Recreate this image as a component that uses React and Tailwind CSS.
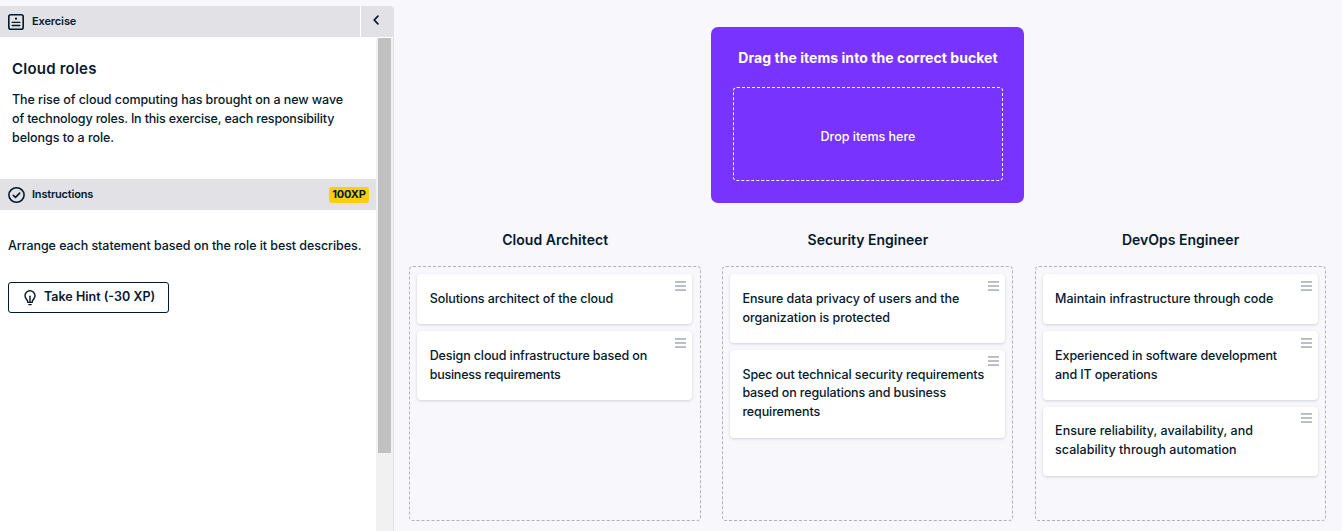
import React from "react";

const buckets = [
  {
    title: "Cloud Architect",
    tracking: "tracking-[0.04px]",
    cards: [
      [["Solutions architect of the cloud", "tracking-[-0.08px]"]],
      [
        ["Design cloud infrastructure based on", "tracking-[-0.11px]"],
        ["business requirements", "tracking-[-0.24px]"],
      ],
    ],
  },
  {
    title: "Security Engineer",
    tracking: "tracking-[0px]",
    cards: [
      [
        ["Ensure data privacy of users and the", "tracking-[-0.05px]"],
        ["organization is protected", "tracking-[-0.04px]"],
      ],
      [
        ["Spec out technical security requirements", "tracking-[-0.09px]"],
        ["based on regulations and business", "tracking-[-0.12px]"],
        ["requirements", "tracking-[-0.12px]"],
      ],
    ],
  },
  {
    title: "DevOps Engineer",
    tracking: "tracking-[0px]",
    cards: [
      [["Maintain infrastructure through code", "tracking-[-0.03px]"]],
      [
        ["Experienced in software development", "tracking-[-0.11px]"],
        ["and IT operations", "tracking-[-0.12px]"],
      ],
      [
        ["Ensure reliability, availability, and", "tracking-[0.01px]"],
        ["scalability through automation", "tracking-[0.03px]"],
      ],
    ],
  },
];

function ExerciseIcon() {
  return (
    <svg width="16" height="16" viewBox="0 0 16 16" fill="none" stroke="currentColor" strokeWidth="1.6" className="shrink-0">
      <rect x="0.8" y="0.8" width="14.4" height="14.4" rx="2" />
      <path d="M4.2 8.4h7.6M4.2 11.5h7.6" strokeWidth="1.4" strokeLinecap="round" />
      <circle cx="8" cy="4.7" r="1.1" fill="currentColor" stroke="none" />
    </svg>
  );
}

function CheckIcon() {
  return (
    <svg width="17" height="16" viewBox="0 0 17 16" fill="none" stroke="currentColor" strokeWidth="1.6" className="shrink-0">
      <ellipse cx="8.5" cy="8" rx="7.6" ry="7.2" />
      <path d="M5.3 8.3l2.2 2.1 4.2-4.3" strokeLinecap="round" strokeLinejoin="round" />
    </svg>
  );
}

function BulbIcon() {
  return (
    <svg width="12" height="16" viewBox="0 0 12 16" fill="none" stroke="currentColor" strokeWidth="1.4" strokeLinecap="round" className="shrink-0">
      <path d="M3.7 11.6C3.6 9.8 1 8.8 1 5.8a5 5 0 0 1 10 0c0 3-2.6 4-2.7 5.8" />
      <path d="M6 6.2v5.6" />
      <path d="M3.8 12.4h4.4" />
      <path d="M4.8 14.6h2.4" />
    </svg>
  );
}

function Card({ lines }) {
  return (
    <div className="relative rounded-[4px] bg-white py-[15.8px] pl-[12.5px] shadow-[0_1px_3px_rgba(5,25,45,0.16)]">
      {lines.map(([text, tracking]) => (
        <p key={text} className={"whitespace-nowrap text-[12.5px] leading-[18.8px] font-medium " + tracking}>
          {text}
        </p>
      ))}
      <svg width="11" height="11" viewBox="0 0 11 11" className="absolute top-[6.7px] right-[6px]" fill="#b4b8c0">
        <rect y="0" width="11" height="1.8" />
        <rect y="4.1" width="11" height="1.8" />
        <rect y="8.2" width="11" height="1.8" />
      </svg>
    </div>
  );
}

export default function App() {
  return (
    <div className="flex h-[531px] w-[1342px] overflow-hidden bg-[#f7f7fc] font-['Inter','Liberation_Sans',sans-serif] text-[#05192d]">
      <aside className="mt-[6px] flex w-[394px] shrink-0 flex-col overflow-hidden rounded-tr-[4px] border-r border-[#e1e1e6] bg-white">
        <header className="flex h-[31px] shrink-0 gap-px">
          <div className="flex w-[360px] items-center gap-2 bg-[#e1e1e6] pl-2">
            <ExerciseIcon />
            <h2 className="mb-[2px] text-[11px] leading-4 font-semibold tracking-[-0.12px]">Exercise</h2>
          </div>
          <button className="flex flex-1 items-start justify-center bg-[#e1e1e6] pt-[9px] pr-[2px]">
            <svg width="6" height="10" viewBox="0 0 6 10" fill="none" stroke="currentColor" strokeWidth="1.7" strokeLinecap="round" strokeLinejoin="round">
              <path d="M4.9 1.2L1.2 5l3.7 3.8" />
            </svg>
          </button>
        </header>
        <div className="mt-px flex min-h-0 flex-1">
          <div className="w-[376px] shrink-0">
            <section className="h-[141px] px-3 pt-[20px]">
              <h1 className="text-[15px] leading-[22px] font-semibold tracking-[0.22px]">Cloud roles</h1>
              <div className="mt-[10px] text-[12.5px] leading-[19px] font-medium whitespace-nowrap">
                <p className="tracking-[-0.07px]">The rise of cloud computing has brought on a new wave</p>
                <p className="tracking-[-0.16px]">of technology roles. In this exercise, each responsibility</p>
                <p className="tracking-[-0.05px]">belongs to a role.</p>
              </div>
            </section>
            <div className="flex h-[31px] items-center bg-[#e1e1e6] pr-[7px] pl-2">
              <CheckIcon />
              <h2 className="mb-[2px] ml-[7px] text-[11px] leading-4 font-semibold tracking-[-0.2px]">Instructions</h2>
              <span className="ml-auto flex h-4 w-10 items-center justify-center rounded-[3px] bg-[#fcce0d] text-[11px] font-bold tracking-[-0.2px]">100XP</span>
            </div>
            <section className="px-2 pt-[26px]">
              <p className="text-[12.5px] leading-[19px] font-medium tracking-[-0.065px] whitespace-nowrap">
                Arrange each statement based on the role it best describes.
              </p>
              <button className="mt-[27px] flex h-[31px] w-[161px] items-center rounded-[3px] border border-[#05192d] pl-[15px] text-[12.5px] font-semibold whitespace-nowrap">
                <BulbIcon />
                <span className="ml-2">Take Hint (-30 XP)</span>
              </button>
            </section>
          </div>
          <div className="w-[17px] bg-[#f1f1f1] pl-[2px]">
            <div className="h-[415px] w-[13px] bg-[#c1c1c1]" />
          </div>
        </div>
      </aside>

      <main className="flex flex-1 flex-col pr-4 pl-[15.2px]">
        <section className="mt-[27px] ml-[301.8px] h-[176px] w-[313px] rounded-[7px] bg-[#7933ff] pt-[20px] pr-[21px] pl-[22px] text-white">
          <h2 className="text-center text-[14px] leading-[22px] font-bold tracking-[0.05px] whitespace-nowrap">Drag the items into the correct bucket</h2>
          <div className="mt-[18px] flex h-[94px] items-center justify-center rounded-[4px] border border-dashed border-white pt-[7px] text-[12.5px] font-medium">
            <span>Drop items here</span>
          </div>
        </section>
        <div className="mt-[26px] grid grid-cols-3 gap-[21.3px]">
          {buckets.map((bucket) => (
            <section key={bucket.title}>
              <h3 className={"pl-[0.6px] text-center text-[14px] leading-[22px] font-semibold " + bucket.tracking}>{bucket.title}</h3>
              <div className="mt-[15px] flex h-[255px] flex-col gap-[6.53px] rounded-[4px] border border-dashed border-[#adb3bb] pt-[7px] pr-[7.3px] pl-[7px]">
                {bucket.cards.map((lines) => (
                  <Card key={lines[0][0]} lines={lines} />
                ))}
              </div>
            </section>
          ))}
        </div>
      </main>
    </div>
  );
}
